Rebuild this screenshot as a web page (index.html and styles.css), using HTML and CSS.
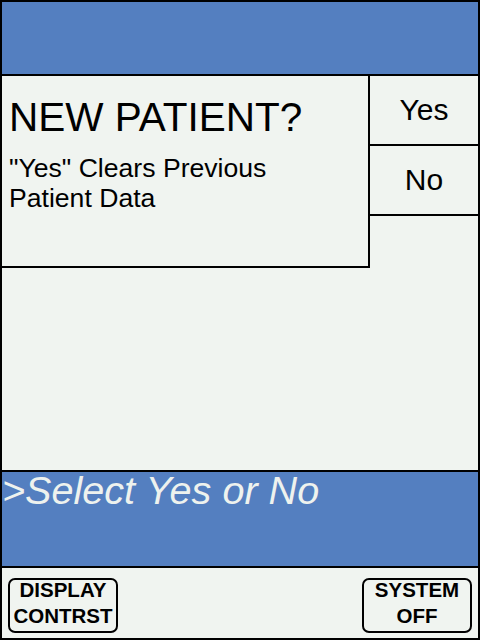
FILE: index.html
```html
<!DOCTYPE html>
<html>
<head>
<meta charset="utf-8">
<link rel="stylesheet" href="styles.css">
</head>
<body>
<div class="screen">
  <header class="title-bar"></header>
  <main class="content">
    <section class="dialog">
      <h1 class="dialog-title">NEW PATIENT?</h1>
      <p class="dialog-note">"Yes" Clears Previous<br>Patient Data</p>
    </section>
    <div class="choices">
      <div class="choice">Yes</div>
      <div class="choice">No</div>
    </div>
  </main>
  <div class="prompt">&gt;Select Yes or No</div>
  <footer class="softkeys">
    <div class="softkey"><span class="softkey-label">DISPLAY<br>CONTRST</span></div>
    <div class="softkey"><span class="softkey-label">SYSTEM<br>OFF</span></div>
  </footer>
</div>
</body>
</html>
```
FILE: styles.css
```css
html, body {
  margin: 0;
  padding: 0;
  background: #f0f4f0;
}

.screen {
  width: 480px;
  height: 640px;
  box-sizing: border-box;
  border: 2px solid #000;
  background: #f0f4f0;
  display: flex;
  flex-direction: column;
  font-family: "Liberation Sans", Arial, sans-serif;
  color: #000;
}

.title-bar {
  flex: none;
  height: 72px;
  background: #547fc0;
  border-bottom: 2px solid #000;
}

.content {
  flex: 1;
  display: flex;
  align-items: flex-start;
  min-height: 0;
}

.dialog {
  width: 368px;
  height: 192px;
  box-sizing: border-box;
  border-right: 2px solid #000;
  border-bottom: 2px solid #000;
  padding: 21px 0 0 7px;
}

.dialog-title {
  margin: 0;
  font-size: 40.5px;
  font-weight: normal;
  line-height: 40px;
}

.dialog-note {
  margin: 16px 0 0;
  font-size: 26.6px;
  line-height: 30px;
}

.choices {
  width: 108px;
}

.choice {
  height: 68px;
  border-bottom: 2px solid #000;
  display: flex;
  align-items: center;
  justify-content: center;
  font-size: 30px;
}

.prompt {
  flex: none;
  height: 92px;
  border-top: 2px solid #000;
  border-bottom: 2px solid #000;
  background: #547fc0;
  color: #eef2ee;
  font-style: italic;
  font-size: 39.6px;
  line-height: 32px;
  padding: 2px 0 0 0;
  white-space: nowrap;
}

.softkeys {
  flex: none;
  height: 70px;
  box-sizing: border-box;
  padding: 10px 6px 0;
  display: flex;
  justify-content: space-between;
  align-items: flex-start;
}

.softkey {
  width: 110px;
  height: 55px;
  box-sizing: border-box;
  border: 2px solid #000;
  border-radius: 7px;
  text-align: center;
  font-weight: bold;
  font-size: 20.5px;
  line-height: 26px;
}

.softkey-label {
  display: block;
  margin-top: -3px;
}
```
